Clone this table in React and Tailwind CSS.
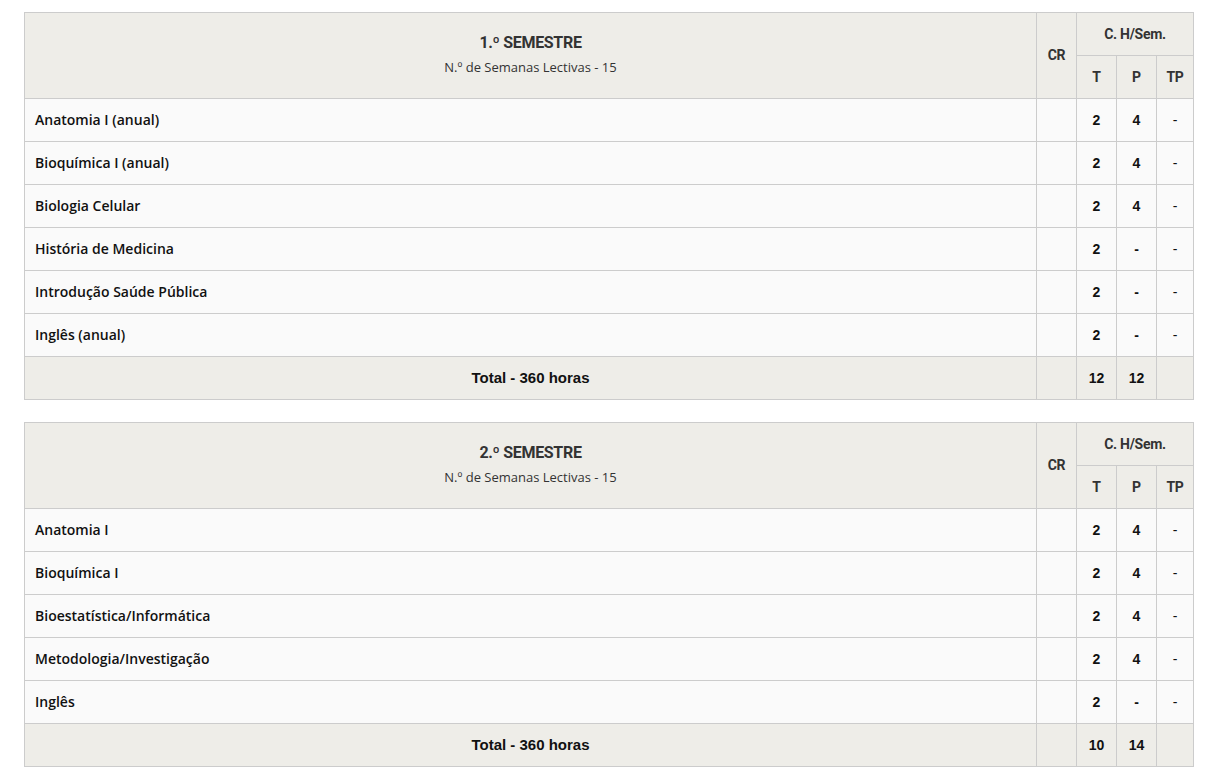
import React from 'react';

const semesters = [
  {
    title: '1.º SEMESTRE',
    rows: [
      ['Anatomia I (anual)', '2', '4', '-'],
      ['Bioquímica I (anual)', '2', '4', '-'],
      ['Biologia Celular', '2', '4', '-'],
      ['História de Medicina', '2', '-', '-'],
      ['Introdução Saúde Pública', '2', '-', '-'],
      ['Inglês (anual)', '2', '-', '-'],
    ],
    total: ['12', '12'],
  },
  {
    title: '2.º SEMESTRE',
    rows: [
      ['Anatomia I', '2', '4', '-'],
      ['Bioquímica I', '2', '4', '-'],
      ['Bioestatística/Informática', '2', '4', '-'],
      ['Metodologia/Investigação', '2', '4', '-'],
      ['Inglês', '2', '-', '-'],
    ],
    total: ['10', '14'],
  },
];

const cell = 'border border-[#cccccc] h-[43px] p-0';
const num = "text-center text-[14px] font-bold text-[#111] font-['Liberation_Sans',Arial,sans-serif]";
const cond = "font-['Roboto',sans-serif] font-bold tracking-[-0.02em] text-[#333]";

const SemesterTable = ({ semester }) => (
  <table className="w-[1170px] border-collapse table-fixed">
    <colgroup>
      <col />
      <col className="w-[40px]" />
      <col className="w-[40px]" />
      <col className="w-[40px]" />
      <col className="w-[37px]" />
    </colgroup>
    <thead className="bg-[#eeede8]">
      <tr>
        <th rowSpan={2} className={`${cell} text-center align-middle pb-[2px]`}>
          <div className={`${cond} text-[16px] leading-[20px]`}>{semester.title}</div>
          <div className="font-['Open_Sans',sans-serif] text-[13px] font-normal text-[#333] mt-[6px] leading-[17px]">
            N.º de Semanas Lectivas - 15
          </div>
        </th>
        <th rowSpan={2} className={`${cell} ${cond} text-[14px]`}>CR</th>
        <th colSpan={3} className={`${cell} ${cond} text-[14px]`}>C. H/Sem.</th>
      </tr>
      <tr>
        <th className={`${cell} ${cond} text-[14px]`}>T</th>
        <th className={`${cell} ${cond} text-[14px]`}>P</th>
        <th className={`${cell} ${cond} text-[14px]`}>TP</th>
      </tr>
    </thead>
    <tbody className="bg-[#fafafa]">
      {semester.rows.map(([name, t, p, tp]) => (
        <tr key={name}>
          <td className={`${cell} px-[10px] pb-[2px] font-['Open_Sans',sans-serif] text-[14px] font-semibold text-[#111]`}>
            {name}
          </td>
          <td className={cell}></td>
          <td className={`${cell} ${num}`}>{t}</td>
          <td className={`${cell} ${num}`}>{p}</td>
          <td className={`${cell} ${num} font-normal`}>{tp}</td>
        </tr>
      ))}
      <tr className="bg-[#eeede8]">
        <td className={`${cell} text-center text-[15px] font-bold text-[#111] font-['Liberation_Sans',Arial,sans-serif]`}>
          Total - 360 horas
        </td>
        <td className={cell}></td>
        <td className={`${cell} ${num}`}>{semester.total[0]}</td>
        <td className={`${cell} ${num}`}>{semester.total[1]}</td>
        <td className={cell}></td>
      </tr>
    </tbody>
  </table>
);

export default function App() {
  return (
    <div className="bg-white min-h-[775px] pt-[12px] pl-[24px] flex flex-col gap-[22px]">
      {semesters.map((s) => (
        <SemesterTable key={s.title} semester={s} />
      ))}
    </div>
  );
}
